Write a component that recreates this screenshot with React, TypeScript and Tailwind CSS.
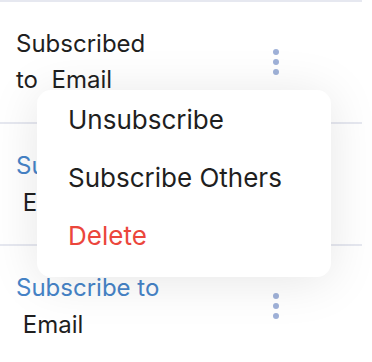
import React from 'react'

type Row = {
  status: 'subscribed' | 'unsubscribed'
}

const rows: Row[] = [{ status: 'subscribed' }, { status: 'unsubscribed' }, { status: 'unsubscribed' }]

function Dots() {
  return (
    <div className="flex flex-col items-center gap-[4px]">
      <span className="block h-[6px] w-[6px] rounded-full bg-[#9fb1d8]" />
      <span className="block h-[6px] w-[6px] rounded-full bg-[#9fb1d8]" />
      <span className="block h-[6px] w-[6px] rounded-full bg-[#9fb1d8]" />
    </div>
  )
}

export default function App() {
  return (
    <div
      className="relative h-[362px] w-[372px] overflow-hidden bg-white text-[24px] text-[#1f1f1f]"
      style={{ fontFamily: 'Inter, "Noto Sans", sans-serif' }}
    >
      <div className="w-[362px]">
        {rows.map((row, i) => (
          <div key={i} className="flex h-[122px] items-center border-t-2 border-[#e6e8f0] pl-4">
            <div className="w-[241px]">
              {row.status === 'subscribed' ? (
                <div className="w-[150px] leading-[36px]">
                  Subscribed
                  <br />
                  to {'\u00A0'}Email
                </div>
              ) : (
                <div className="leading-[37px]">
                  <div className="text-[#4684c8]">Subscribe to</div>
                  <div>{'\u00A0'}Email</div>
                </div>
              )}
            </div>
            <div className="flex w-[38px] justify-center">
              <Dots />
            </div>
          </div>
        ))}
      </div>

      {/* menu */}
      <div className="absolute left-[37px] top-[90px] flex h-[187px] w-[294px] flex-col rounded-[14px] bg-white pl-[31px] text-[26px] shadow-[0_4px_50px_rgba(0,0,0,0.1)]">
        <div className="flex h-[58px] items-center">Unsubscribe</div>
        <div className="flex h-[58px] items-center">Subscribe Others</div>
        <div className="flex h-[58px] items-center text-[#eb463c]">Delete</div>
      </div>
    </div>
  )
}
